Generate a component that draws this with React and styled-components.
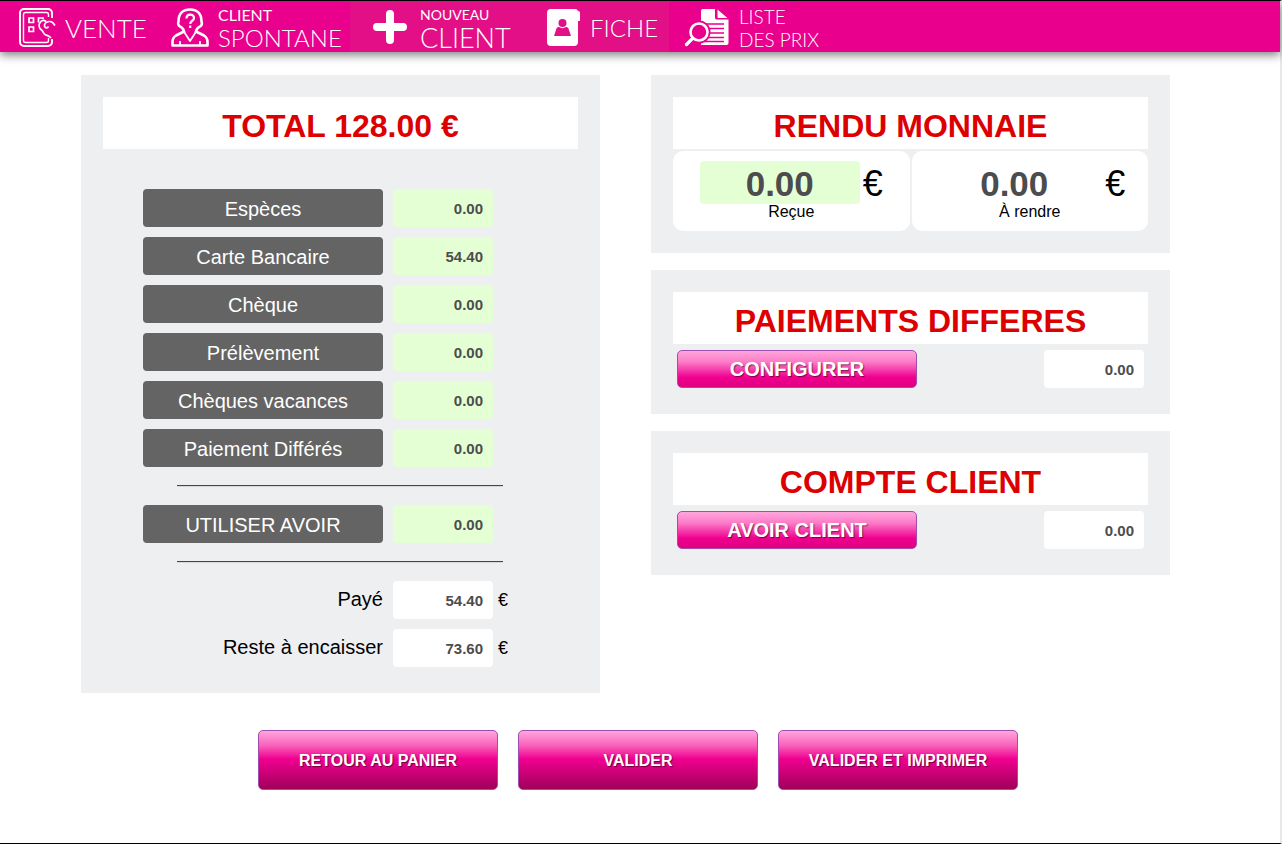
import React, { useState } from "react"
import styled, { createGlobalStyle, css } from "styled-components"

const PAYMENTS = [
  { id: "especes", label: "Espèces", amount: "0.00" },
  { id: "carte", label: "Carte Bancaire", amount: "54.40" },
  { id: "cheque", label: "Chèque", amount: "0.00" },
  { id: "prelevement", label: "Prélèvement", amount: "0.00" },
  { id: "vacances", label: "Chèques vacances", amount: "0.00" },
  { id: "differes", label: "Paiement Différés", amount: "0.00" },
]

const SaleIcon = () => (
  <svg width="38" height="40" viewBox="0 0 38 40" fill="none" stroke="#fff">
    <path
      d="M34 11V6a4 4 0 0 0-4-4H6a4 4 0 0 0-4 4v29a4 4 0 0 0 4 4h24a4 4 0 0 0 4-4v-3"
      strokeWidth="2"
    />
    <path d="M30.500 10V7.500a2 2 0 0 0-2-2h-21a2 2 0 0 0-2 2v26a2 2 0 0 0 2 2h21a2 2 0 0 0 2-2V31" strokeWidth="1.400" />
    <path d="M11 11h4.500v4.500H11zM11 20h4.500v4.500H11zM25 12v-1h-4.500v4.500" strokeWidth="1.700" />
    <path
      d="M37 18.500c-1.500-2.500-3-4-5-4-2.500 0-5 1.500-5.500 3.500-.5 2.500 2.500 4 4 1.500M28 14.500c-2-1.800-4-1.500-5.500.5-2.500 3-1.500 6 1 8 1.500 1 1.500 3 3.500 4.500 2 1.200 4 1 6 3.500"
      strokeWidth="1.700"
    />
  </svg>
)

const WalkInIcon = () => (
  <svg width="38" height="40" viewBox="0 0 38 40" fill="none" stroke="#fff" strokeWidth="2.600" strokeLinejoin="round">
    <path d="M13 25c0-2-1-3.500-3-5-2.500-1-3.500-3-2.500-5.500C7.500 6.500 12 2.500 19 2.500s11.500 4 11.500 12c1 2.500 0 4.500-2.500 5.500-2 1.500-3 3-3 5" />
    <path d="M14 24L5 28.500c-2.500 1.500-3.500 4-3.500 6.500v3.500h35V35c0-2.500-1-5-3.500-6.500L24 24" />
    <path d="M13.500 25.500L19 34l5.500-8.500M9 34v4M29 34v4" strokeWidth="1.800" />
    <path d="M15.500 11.500c0-5 7.500-5 7.500-.5 0 3-3.800 2.500-3.800 6M19.200 18.500v2.500" strokeWidth="2.200" />
  </svg>
)

const PlusIcon = () => (
  <svg width="36" height="36" viewBox="0 0 36 36" stroke="#fff" strokeWidth="8" strokeLinecap="round">
    <path d="M18 5v26M5 18h26" />
  </svg>
)

const CardIcon = () => (
  <svg width="34" height="38" viewBox="0 0 34 38">
    <path
      fill="#fff"
      d="M4 1h24a3 3 0 0 1 3 2c2 0 2 1 2 3v7h-2v21a4 4 0 0 1-4 4H4a4 4 0 0 1-4-4V5a4 4 0 0 1 4-4z"
    />
    <circle cx="15.500" cy="15" r="4" fill="#e20f86" />
    <path fill="#e20f86" d="M7 28l2.500-7.500c.5-1 1.500-1.500 2.500-1.500 2 1.500 5 1.500 7 0 1 0 2 .5 2.500 1.500L24 28z" />
  </svg>
)

const PriceListIcon = () => (
  <svg width="46" height="40" viewBox="0 0 46 40">
    <path fill="#fff" d="M19 2h12v8c0 2 .5 2.500 2.500 2.500h11V36a2 2 0 0 1-2 2H17V4a2 2 0 0 1 2-2z" />
    <path fill="#fff" d="M33.500 2.500l10 8.500h-9c-.7 0-1-.3-1-1z" />
    <path d="M22 17h18M24 21.500h16M24 26h16M24 30.500h16M20 34.500h20" stroke="#e9008c" strokeWidth="1.600" />
    <circle cx="15" cy="25" r="11.500" fill="#e9008c" />
    <circle cx="15" cy="25" r="8.500" fill="#e9008c" stroke="#fff" strokeWidth="2.600" />
    <path d="M8.500 31.500L2.500 37.500" stroke="#fff" strokeWidth="3.200" strokeLinecap="round" />
  </svg>
)

const AmountRow = ({ id, label, value, onChange }) => (
  <Row>
    <MethodLabel htmlFor={id}>{label}</MethodLabel>
    <Amount id={id} editable value={value} onChange={onChange} />
  </Row>
)

const Amount = ({ editable, ...props }) => (
  <AmountInput type="text" inputMode="decimal" $editable={editable} readOnly={!editable} {...props} />
)

const App = () => {
  const [amounts, setAmounts] = useState(
    Object.fromEntries(PAYMENTS.map(({ id, amount }) => [id, amount]))
  )
  const [credit, setCredit] = useState("0.00")
  const [received, setReceived] = useState("0.00")

  const handleAmount = id => ({ target: { value } }) =>
    setAmounts(prev => ({ ...prev, [id]: value }))

  return (
    <Page>
      <GlobalStyle />
      <NavBar>
        <NavItem href="#vente" $width="160px" $inset="18px">
          <SaleIcon />
          <NavText $size="26px" $leading="30px">VENTE</NavText>
        </NavItem>
        <NavItem href="#spontane" $width="190px" $inset="11px">
          <WalkInIcon />
          <NavText $size="24px" $leading="26px">
            <NavSmall $size="16px">CLIENT</NavSmall>
            SPONTANE
          </NavText>
        </NavItem>
        <NavItem href="#nouveau" $width="183px" $inset="22px" $gap="12px" $tinted>
          <PlusIcon />
          <NavText $size="27px" $leading="26px">
            <NavSmall $size="14px">NOUVEAU</NavSmall>
            CLIENT
          </NavText>
        </NavItem>
        <NavItem href="#fiche" $width="136px" $inset="14px" $tinted>
          <CardIcon />
          <NavText $size="24px" $leading="30px">FICHE</NavText>
        </NavItem>
        <NavItem href="#prix" $width="190px" $inset="15px">
          <PriceListIcon />
          <NavText $size="19px" $leading="23px">
            LISTE
            <br />
            DES PRIX
          </NavText>
        </NavItem>
      </NavBar>

      <Columns>
        <Panel>
          <Title>TOTAL 128.00 €</Title>
          <PaymentList>
            {PAYMENTS.map(({ id, label }) => (
              <AmountRow key={id} id={id} label={label} value={amounts[id]} onChange={handleAmount(id)} />
            ))}
            <Divider />
            <AmountRow
              id="avoir"
              label="UTILISER AVOIR"
              value={credit}
              onChange={({ target: { value } }) => setCredit(value)}
            />
            <Divider />
            <Row>
              <SumLabel htmlFor="paye">Payé</SumLabel>
              <Amount id="paye" value="54.40" />
              <Currency>€</Currency>
            </Row>
            <Row>
              <SumLabel htmlFor="reste">Reste à encaisser</SumLabel>
              <Amount id="reste" value="73.60" />
              <Currency>€</Currency>
            </Row>
          </PaymentList>
        </Panel>

        <Stack>
          <Panel>
            <Title>RENDU MONNAIE</Title>
            <ChangeCards>
              <ChangeCard>
                <ChangeLine $gap="3px">
                  <ChangeInput
                    id="recue"
                    type="text"
                    $editable
                    value={received}
                    onChange={({ target: { value } }) => setReceived(value)}
                  />
                  <BigCurrency>€</BigCurrency>
                </ChangeLine>
                <label htmlFor="recue">Reçue</label>
              </ChangeCard>
              <ChangeCard>
                <ChangeLine $gap="11px">
                  <ChangeInput id="rendre" type="text" value="0.00" readOnly />
                  <BigCurrency>€</BigCurrency>
                </ChangeLine>
                <label htmlFor="rendre">À rendre</label>
              </ChangeCard>
            </ChangeCards>
          </Panel>

          <Panel>
            <Title>PAIEMENTS DIFFERES</Title>
            <ActionRow>
              <GlossyButton type="button">CONFIGURER</GlossyButton>
              <Amount aria-label="Paiements différés" value="0.00" />
            </ActionRow>
          </Panel>

          <Panel>
            <Title>COMPTE CLIENT</Title>
            <ActionRow>
              <GlossyButton type="button">AVOIR CLIENT</GlossyButton>
              <Amount aria-label="Compte client" value="0.00" />
            </ActionRow>
          </Panel>
        </Stack>
      </Columns>

      <Footer>
        <GlossyButton type="button" $large>RETOUR AU PANIER</GlossyButton>
        <GlossyButton type="button" $large>VALIDER</GlossyButton>
        <GlossyButton type="button" $large>VALIDER ET IMPRIMER</GlossyButton>
      </Footer>
    </Page>
  )
}

const GlobalStyle = createGlobalStyle`
  * {
    box-sizing: border-box;
  }

  body {
    margin: 0;
    background: #fff;
    color: #000;
    font-family: "Liberation Sans", Arial, Helvetica, sans-serif;
    font-size: 16px;
  }

  input,
  button {
    font-family: inherit;
  }
`

const Page = styled.div`
  min-height: 100vh;
  border-top: 1px solid #000;
  border-right: 2px solid #e8e8ea;
  border-bottom: 1px solid #000;
`

const NavBar = styled.nav`
  display: flex;
  height: 51px;
  background: #e9008c;
  box-shadow: 0 3px 9px rgba(0, 0, 0, 0.5);
`

const NavItem = styled.a`
  display: flex;
  flex: none;
  align-items: center;
  gap: ${({ $gap }) => $gap || "9px"};
  width: ${({ $width }) => $width};
  padding-left: ${({ $inset }) => $inset};
  background: ${({ $tinted }) => ($tinted ? "#e20f86" : "#e9008c")};
  color: #fff;
  text-decoration: none;
`

const NavText = styled.span`
  padding-top: 2px;
  font-family: Lato, sans-serif;
  font-size: ${({ $size }) => $size};
  font-weight: 300;
  line-height: ${({ $leading }) => $leading};
  white-space: nowrap;
`

const NavSmall = styled.small`
  display: block;
  font-size: ${({ $size }) => $size};
  font-weight: 400;
  line-height: 21px;
`

const Columns = styled.main`
  display: grid;
  grid-template-columns: 1fr 1fr;
  align-items: start;
  gap: 51px;
  padding: 23px 110px 0 81px;
`

const Stack = styled.div`
  display: flex;
  flex-direction: column;
  gap: 17px;
`

const Panel = styled.section`
  padding: 22px;
  background: #edeff1;
`

const Title = styled.h1`
  margin: 0;
  padding-top: 6px;
  background: #fff;
  color: #d00;
  font-size: 32px;
  line-height: 46px;
  text-align: center;
`

const PaymentList = styled.div`
  display: flex;
  flex-direction: column;
  gap: 10px;
  padding: 40px 0 4px 40px;
`

const Row = styled.div`
  display: flex;
  align-items: center;
  gap: 10px;
`

const MethodLabel = styled.label`
  width: 240px;
  padding-top: 2px;
  border-radius: 4px;
  background: #646464;
  color: #fff;
  font-size: 20px;
  line-height: 36px;
  text-align: center;
`

const SumLabel = styled.label`
  width: 240px;
  padding-bottom: 2px;
  font-size: 20px;
  line-height: 36px;
  text-align: right;
`

const fieldStyle = css`
  border: 0;
  border-radius: 4px;
  outline: none;
  background: ${({ $editable }) => ($editable ? "#e5ffd5" : "#fff")};
  color: #4c4c4e;
  font-weight: bold;
`

const AmountInput = styled.input`
  ${fieldStyle}
  width: 100px;
  height: 38px;
  padding: 0 10px;
  font-size: 15px;
  text-align: right;
`

const Currency = styled.span`
  margin-left: -5px;
  font-size: 18px;
`

const Divider = styled.hr`
  width: 326px;
  margin: 8px 0 8px 34px;
  border: 0;
  border-top: 1px solid #464648;
  border-bottom: 1px solid #d8d8da;
`

const ChangeCards = styled.div`
  display: grid;
  grid-template-columns: 1fr 1fr;
  gap: 2px;
  margin-top: 2px;
`

const ChangeCard = styled.div`
  display: flex;
  flex-direction: column;
  align-items: center;
  height: 80px;
  padding-top: 10px;
  border-radius: 10px;
  background: #fff;
  line-height: 16px;
`

const ChangeLine = styled.div`
  display: flex;
  align-items: center;
  gap: ${({ $gap }) => $gap};
`

const ChangeInput = styled.input`
  ${fieldStyle}
  width: 160px;
  height: 43px;
  padding: 2px 0 0;
  font-size: 35px;
  text-align: center;
`

const BigCurrency = styled.span`
  padding-top: 2px;
  font-size: 36px;
  line-height: 41px;
`

const ActionRow = styled.div`
  display: flex;
  justify-content: space-between;
  margin: 6px 4px 4px;
`

const GlossyButton = styled.button`
  width: 240px;
  height: ${({ $large }) => ($large ? "60px" : "38px")};
  padding: ${({ $large }) => ($large ? "2px 0 0" : "0")};
  border: 1px solid #a04cb0;
  border-radius: 5px;
  background: ${({ $large }) =>
    $large
      ? "linear-gradient(#ffa6dc 0%, #f862bb 25%, #f00090 48%, #a0005a 100%)"
      : "linear-gradient(#ffa6dc 0%, #fc7cc8 30%, #f00090 73%, #e0007e 100%)"};
  color: #fff;
  font-size: ${({ $large }) => ($large ? "16px" : "20px")};
  font-weight: bold;
  text-shadow: 1px 1px 1px rgba(0, 0, 0, 0.5);
  cursor: pointer;
`

const Footer = styled.footer`
  display: flex;
  justify-content: center;
  gap: 20px;
  padding: 37px 4px 53px 0;
`

export default App
